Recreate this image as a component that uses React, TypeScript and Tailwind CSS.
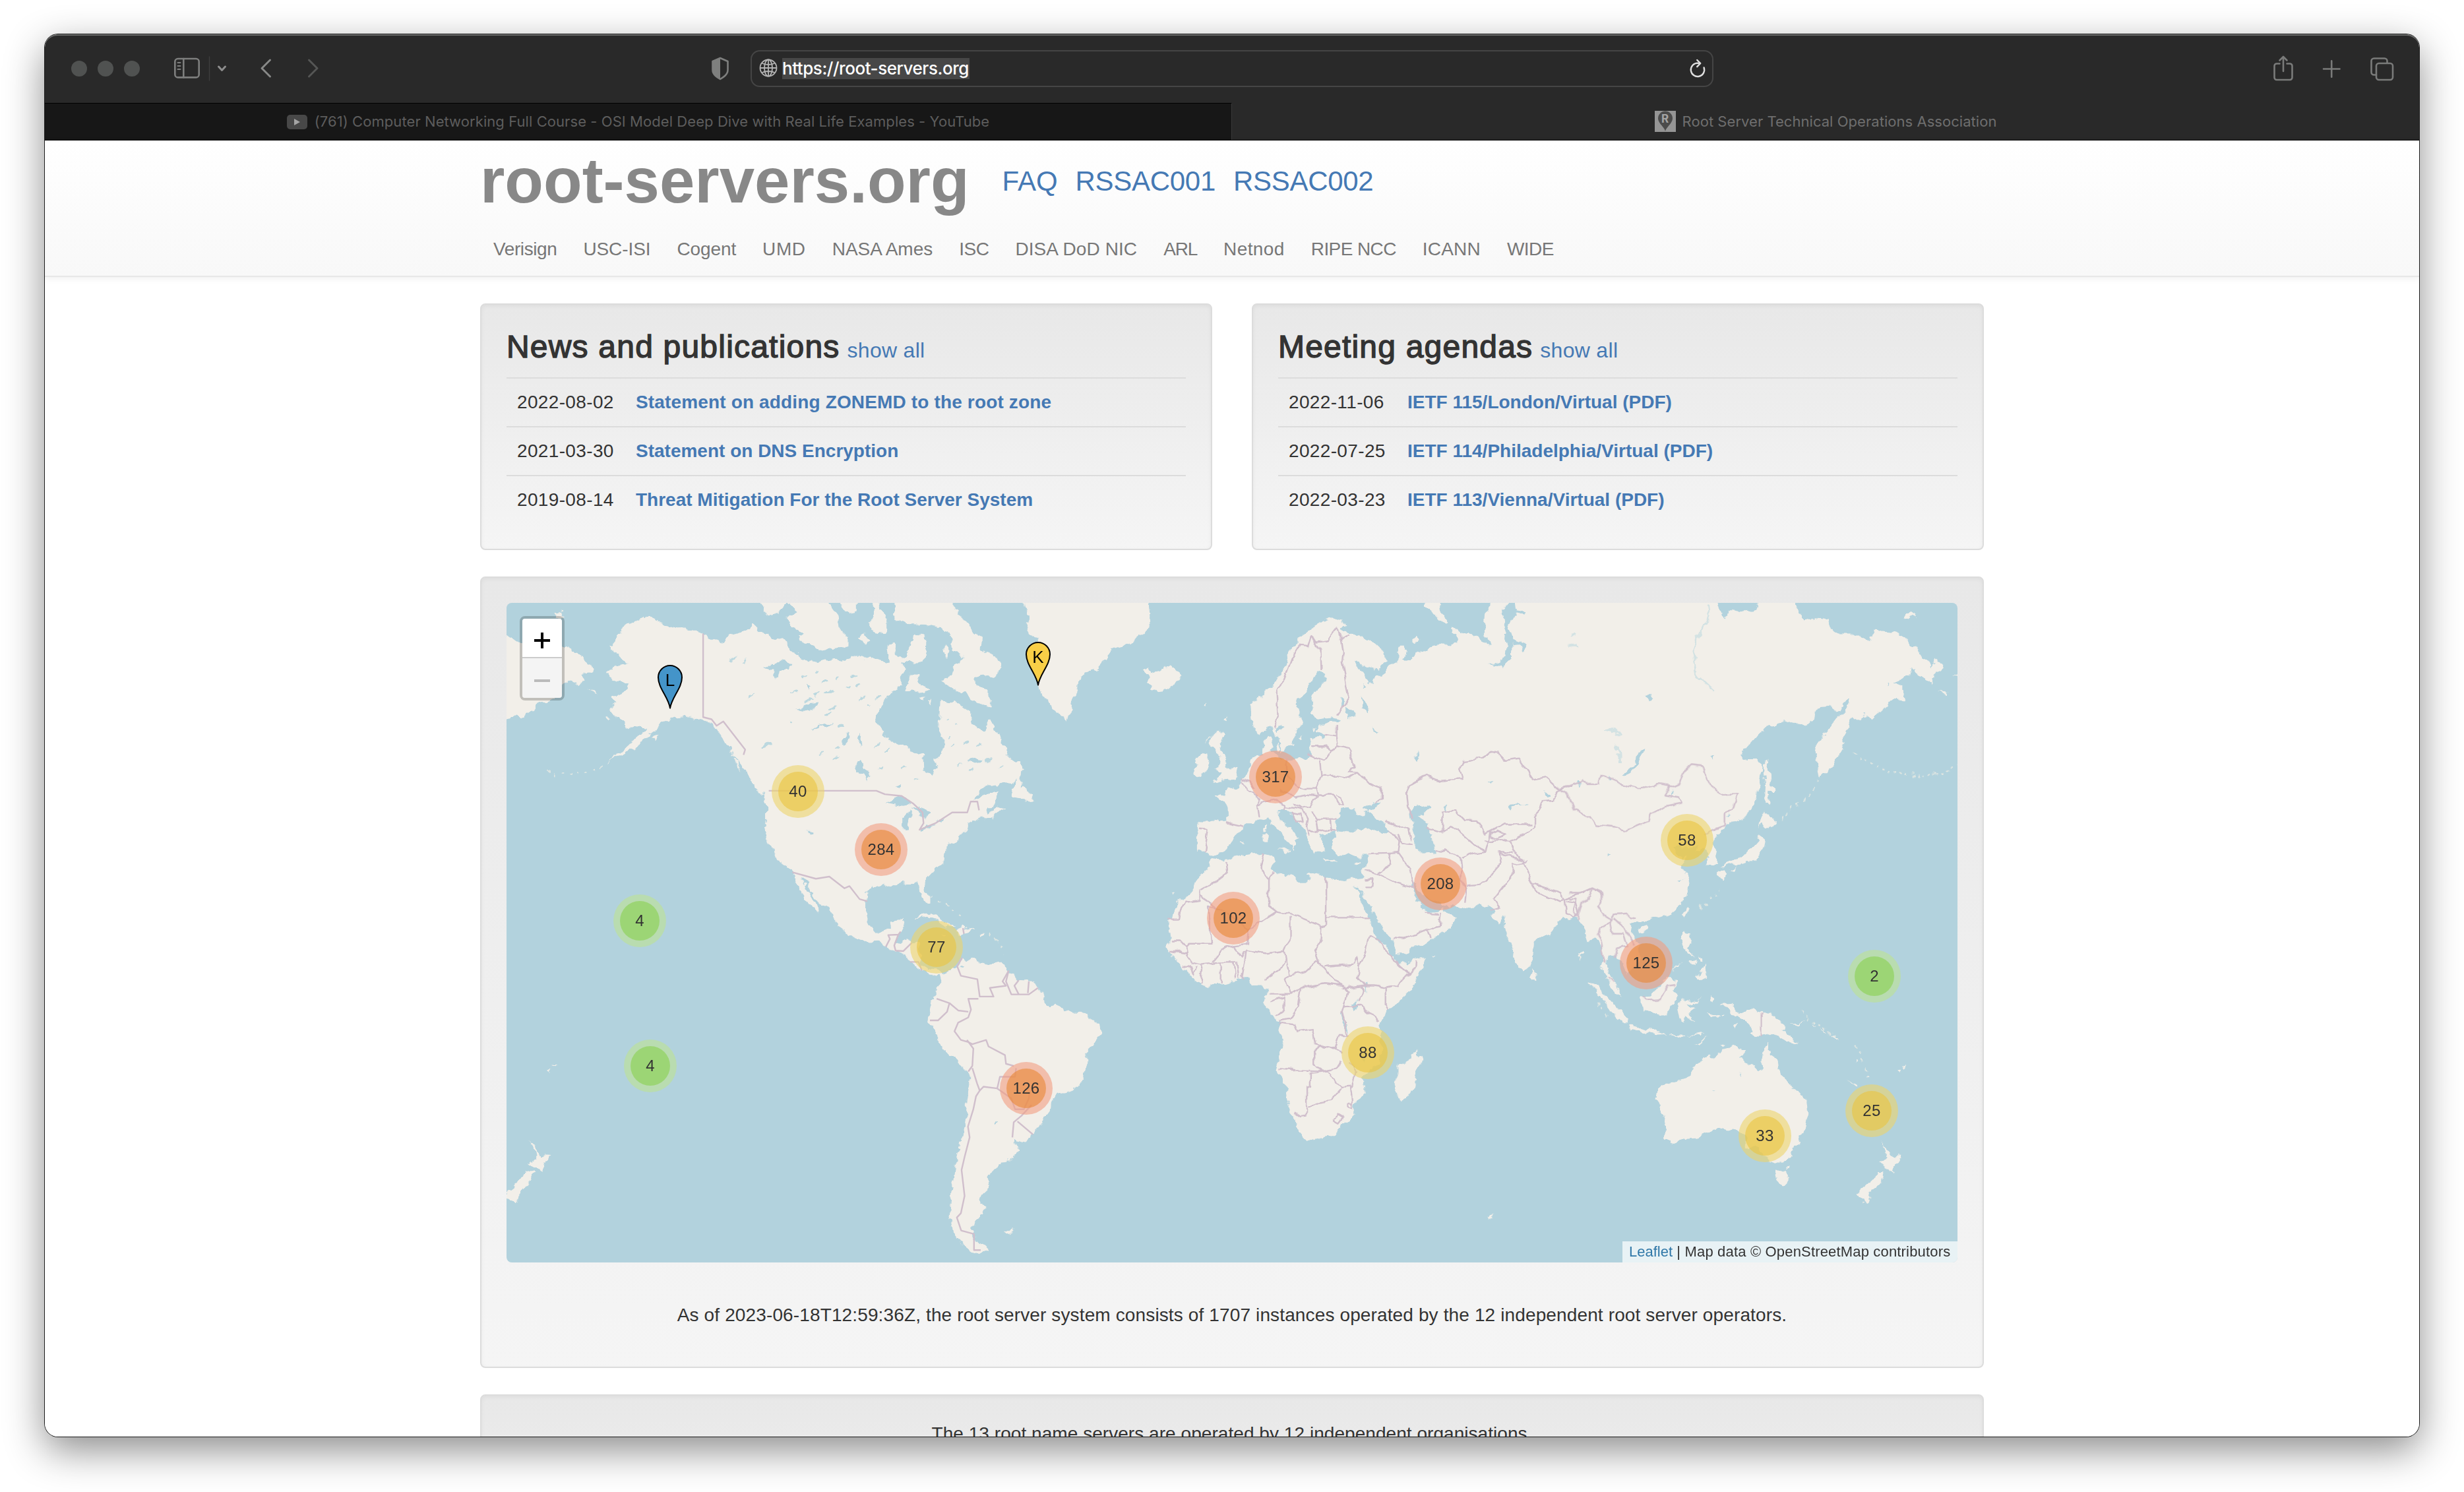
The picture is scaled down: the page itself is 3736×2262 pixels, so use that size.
import React from "react";

const LAND = "#f2efe9";
const WATER = "#b2d2dd";
const BORDER = "#d0bfcc";

/* ---------- map data: one block per region, each with its own coordinate grid ---------- */

const AMERICAS_LAND = [
  "0,90 16,95 40,110 70,112 110,118 150,112 185,118 215,135 245,150 275,172 255,185 240,185 250,205 230,208 200,200 180,215 150,245 115,255 90,268 57,290 45,280 16,290 0,290",
  "155,45 180,42 190,50 165,58",
  "600,92 575,85 545,82 520,75 490,70 460,62 425,50 405,60 385,70 360,80 350,92 318,122 335,130 355,145 370,155 378,165 345,165 330,175 302,185 320,192 335,200 345,205 378,205 375,225 355,235 325,240 340,250 322,265 335,280 350,290 365,295 370,312 400,308 430,310 415,325 385,345 345,372 310,392 380,363 420,345 440,325 465,310 480,295 500,290 520,285 545,280 575,290 600,292 625,300 645,315 665,345 680,355 690,375 705,390 720,405 740,430 745,435 770,455 785,470 790,490 790,520 785,545 795,575 815,600 828,625 850,632 865,643 880,670 895,700 915,715 935,735 950,738 940,720 925,700 905,675 893,658 905,660 925,690 945,710 975,730 995,750 1000,770 1020,780 1050,795 1095,803 1120,802 1145,815 1170,825 1195,832 1215,850 1235,865 1250,870 1275,880 1305,878 1310,895 1290,915 1280,940 1275,955 1268,985 1285,1005 1300,1030 1330,1065 1365,1088 1390,1105 1390,1135 1385,1170 1380,1210 1370,1250 1355,1300 1345,1350 1335,1400 1330,1440 1345,1480 1370,1505 1405,1525 1425,1520 1445,1515 1415,1495 1400,1465 1410,1450 1430,1435 1440,1415 1420,1400 1430,1385 1450,1370 1445,1345 1475,1325 1480,1310 1515,1308 1540,1288 1530,1270 1523,1258 1557,1267 1576,1255 1591,1235 1610,1215 1628,1195 1631,1172 1658,1155 1703,1147 1722,1128 1737,1090 1737,1058 1760,1040 1782,1015 1778,992 1760,985 1726,968 1677,967 1670,957 1632,948 1610,935 1615,932 1602,908 1576,893 1538,892 1508,875 1490,852 1441,855 1396,843 1381,850 1370,840 1355,860 1335,868 1312,876 1290,862 1270,868 1252,860 1243,839 1243,805 1200,803 1175,808 1180,790 1200,760 1190,753 1155,757 1150,775 1130,780 1110,780 1095,765 1082,745 1082,710 1085,690 1105,678 1135,670 1150,678 1180,668 1210,670 1235,667 1245,680 1250,700 1265,715 1275,715 1275,700 1262,675 1265,655 1290,635 1320,615 1325,580 1345,575 1385,545 1390,530 1425,518 1433,515 1450,522 1500,495 1474,490 1465,495 1450,505 1440,500 1460,488 1480,460 1455,458 1425,468 1400,478 1425,455 1445,443 1490,437 1515,438 1545,425 1550,405 1535,390 1505,375 1490,345 1470,310 1450,288 1443,305 1430,317 1405,305 1395,285 1390,268 1355,248 1340,252 1305,246 1303,270 1300,310 1315,345 1310,370 1290,378 1295,405 1282,420 1255,405 1253,370 1225,368 1190,350 1150,335 1135,330 1115,295 1125,265 1145,240 1158,225 1190,210 1180,195 1205,180 1195,160 1215,155 1240,162 1262,145 1265,115 1250,95 1225,88 1222,118 1205,130 1190,150 1172,140 1165,115 1150,120 1148,160 1125,155 1100,145 1080,150 1060,140 1035,155 1000,150 960,155 930,160 905,155 880,135 860,130 840,105 810,100 790,90 765,88 745,72 735,85 710,92 680,98 655,115 640,110 620,102",
  "770,10 770,22 790,45 810,52 830,38 845,22 845,10",
  "850,10 850,22 880,40 850,55 868,80 900,90 880,100 905,115 950,130 1000,125 1030,120 1030,100 1005,80 1000,50 975,22 975,10",
  "1010,10 1010,22 1030,45 1060,42 1060,10",
  "1060,98 1080,88 1100,110 1085,122",
  "1095,10 1112,35 1100,55 1100,85 1118,90 1145,92 1145,60 1125,25 1120,10",
  "1168,10 1171,55 1208,70 1268,72 1313,80 1339,100 1343,130 1373,152 1347,165 1339,190 1302,200 1336,215 1381,230 1411,250 1452,262 1456,245 1441,225 1414,210 1411,190 1433,185 1459,195 1474,188 1487,158 1456,142 1426,130 1429,102 1396,80 1366,50 1336,22 1320,10",
  "1219,185 1234,185 1246,205 1276,225 1238,228 1200,222",
  "1310,130 1322,122 1334,134 1325,148 1312,144",
  "1240,240 1258,238 1250,248",
  "1268,250 1280,246 1276,258",
  "1512,470 1538,422 1550,432 1548,450 1575,462 1583,480 1553,475",
  "1228,745 1265,738 1300,750 1345,768 1328,770 1290,755 1250,746",
  "1352,778 1375,770 1408,778 1385,785 1350,782",
  "1422,782 1440,782 1438,787 1422,787",
  "1312,783 1328,786 1318,789",
  "742,430 775,450 790,465 765,457",
  "690,380 697,383 712,412 700,402",
  "1470,492 1484,488 1476,495",
  "1495,1470 1530,1465 1510,1478",
  "83,1262 103,1280 115,1298 148,1300 130,1315 120,1335 105,1325 80,1315 105,1305 100,1285",
  "75,1332 98,1335 85,1352 60,1385 45,1402 10,1398 10,1385 50,1360",
  "135,1100 150,1097 145,1105",
  "150,1090 165,1087 158,1093",
  "255,222 288,232 270,232",
  "308,288 324,288 316,293",
  "440,335 470,325 460,342",
];

const AMERICAS_LAKES = [
  "1146,487 1175,468 1200,468 1224,487 1190,490 1165,486",
  "1192,543 1192,515 1217,498 1216,515 1208,545 1198,548",
  "1222,493 1245,493 1276,508 1262,520 1250,520 1240,502",
  "1243,545 1290,532 1275,541 1250,549",
  "1286,525 1322,518 1306,528",
  "1047,400 1065,386 1080,395 1096,420 1090,435 1078,415 1058,410",
  "780,165 815,168 825,155 858,160 855,175 825,175 820,195 800,178",
  "868,272 890,270 905,255 945,252 930,266 900,275",
  "920,315 955,300 945,312",
  "1015,345 1028,320 1038,333 1022,350",
  "1065,318 1072,335 1066,350 1060,335",
  "1385,388 1410,380 1432,384 1410,392",
  "910,545 924,553 918,558",
  "1465,1218 1478,1220 1468,1226",
  "945,300 985,302 970,310",
  "905,208 925,212 915,220",
  "1178,442 1190,440 1186,450",
  "1365,858 1378,860 1372,865",
];

const AMERICAS_LINES = [
  "600,92 600,285 625,290 640,305 660,295 690,325 725,360 720,372",
  "795,455 1115,455 1140,463 1190,467 1225,485 1252,505 1255,530 1243,545 1290,530 1340,505 1385,505 1395,480 1415,480 1420,500",
  "865,643 935,658 975,653 1020,680 1035,675 1065,705 1088,710",
  "1143,815 1155,797 1150,788 1180,787 1187,780",
  "1180,787 1168,812 1172,824 1195,825 1220,806",
  "1215,850 1240,850 1250,870",
  "1372,772 1375,785",
  "1370,840 1355,860 1366,882 1415,890 1422,930 1463,930 1452,910 1500,905 1490,895 1508,870",
  "1508,870 1500,895 1516,925 1568,925 1595,910",
  "1538,892 1525,905 1538,925",
  "1568,895 1565,922",
  "1418,935 1388,935 1396,960 1388,978 1358,990 1347,1010 1366,1030 1388,1035 1400,1040 1441,1030 1448,1045 1497,1065 1500,1085 1523,1090",
  "1294,935 1332,945 1325,965 1298,985 1274,985",
  "1332,945 1358,962 1388,965",
  "1384,1030 1403,1050 1400,1090 1388,1103",
  "1400,1095 1414,1130 1422,1147 1411,1160 1403,1190 1387,1230 1392,1255 1377,1300 1368,1330 1377,1390 1366,1430 1354,1440 1367,1470 1405,1478 1405,1515 1425,1515",
  "1422,1147 1433,1138 1474,1142 1482,1115 1527,1115 1530,1095",
  "1474,1142 1516,1165 1527,1190 1553,1190 1568,1165 1570,1150",
  "1519,1255 1523,1220 1546,1205 1576,1180",
  "1534,1218 1580,1248",
];

const ATLANTIC_LAND = [
  "655,10 662,35 690,50 668,70 690,95 722,98 700,130 715,200 735,235 775,270 835,292 845,270 860,235 885,200 890,185 950,175 990,150 1010,125 1060,120 1110,100 1165,75 1155,10",
  "1125,180 1155,170 1165,185 1200,178 1245,165 1280,190 1255,212 1210,228 1165,220 1175,212 1145,205 1160,195",
  "576,1470 600,1466 626,1467 605,1474 590,1476",
];

const WEST_LAND = [
  "172,530 200,522 245,527 272,526 270,500 262,485 228,465 255,460 270,465 272,450 300,447 318,432 340,405 355,380 395,372 391,345 410,330 425,335 418,360 440,375 470,383 500,378 540,380 560,372 555,352 560,335 580,330 590,335 600,325 575,318 580,305 615,298 640,298 652,290 625,285 600,287 570,292 555,275 560,235 590,215 605,200 610,185 580,180 560,195 540,225 515,240 505,260 510,280 530,290 515,305 500,325 495,350 470,355 455,368 450,345 430,312 415,305 400,318 380,325 358,310 352,285 350,255 385,235 420,215 450,185 475,150 490,120 520,100 560,80 600,65 640,55 680,72 660,85 700,92 760,110 805,135 810,160 780,175 730,165 700,155 720,180 740,190 755,205 770,212 770,190 795,190 800,180 830,165 850,165 850,140 845,120 870,120 880,132 868,150 895,155 920,135 970,122 1000,115 1050,118 1055,105 1035,80 1040,75 1065,90 1110,95 1140,110 1165,122 1140,85 1145,50 1165,22 1165,5 1500,5 1500,745 1450,747 1395,755 1365,785 1310,805 1305,855 1275,873 1255,860 1235,815 1215,770 1212,745 1195,765 1165,745 1175,735 1140,718 1060,722 1010,718 975,708 935,695 905,668 895,672 915,705 935,722 950,737 985,735 1000,722 1008,735 1048,745 1020,775 960,800 900,820 845,833 832,800 800,775 775,745 745,710 728,688 735,640 745,605 715,605 690,600 640,600 625,570 640,560 640,548 620,555 600,560 585,555 600,590 570,600 550,575 535,550 530,540 500,520 480,505 455,495 445,500 445,515 480,540 515,565 495,570 495,590 480,575 450,550 420,530 410,515 385,520 360,530 330,530 325,545 290,565 280,585 260,595 235,600 215,605 195,595 170,595 170,560 178,540",
  "215,612 265,615 300,605 345,600 395,600 425,605 430,620 420,635 440,645 490,652 520,665 540,665 545,648 575,645 610,655 670,662 700,658 738,655 728,690 718,690 700,672 720,700 745,740 760,765 770,790 810,815 845,850 890,850 938,840 925,880 890,920 850,945 810,965 785,1000 790,1030 795,1050 785,1080 740,1110 730,1120 738,1160 705,1175 700,1195 670,1225 630,1250 570,1258 540,1265 515,1245 500,1210 485,1195 470,1145 437,1100 450,1060 463,1035 445,990 405,955 400,945 412,910 390,905 360,905 345,888 310,888 250,900 190,905 150,885 120,865 75,830 68,815 80,795 72,755 90,725 110,710 135,700 160,670 175,650 205,635",
  "915,1050 930,1078 905,1130 885,1165 860,1172 842,1160 838,1140 850,1120 850,1090 890,1075 900,1060",
  "1307,863 1328,880 1320,892 1305,890",
  "220,437 255,432 300,428 308,405 275,400 262,370 245,355 262,325 235,315 215,340 205,352 232,362 245,380 240,400 225,408 250,412",
  "155,415 165,400 160,385 185,368 210,372 208,400 180,420",
  "432,350 446,345 446,362 434,362",
  "945,10 945,30 970,45 1000,65 1018,67 995,40 990,10",
  "898,105 912,97 926,104 912,114",
  "445,588 485,590 478,602",
  "395,552 410,550 408,575 396,575",
  "398,535 406,530 406,545 400,546",
  "590,614 645,618 640,622 595,620",
  "698,621 722,616 714,624",
  "318,572 328,568 326,574",
  "515,335 528,325 522,340",
  "560,312 572,308 566,318",
  "225,328 208,330 196,345 208,335",
  "1160,1437 1180,1432 1175,1442",
  "190,255 203,252 200,262",
  "265,288 275,280 272,292",
  "80,686 92,688 86,692",
  "967,834 982,835 975,838",
];

const WEST_LAKES = [
  "645,548 640,530 650,505 680,488 700,495 710,512 735,510 730,500 745,505 790,525 820,548 790,554 740,543 700,545 665,552",
  "732,494 770,480 790,482 762,500 742,503",
  "890,510 905,490 950,483 962,490 945,500 940,510 925,512 950,535 960,560 975,575 978,600 945,602 910,590 905,550",
  "690,945 718,940 720,955 695,966",
  "672,262 700,268 705,282 680,288",
  "725,235 745,255 748,270 730,262",
  "443,318 452,300 466,305 455,316",
  "1222,498 1240,485 1298,484 1240,490 1230,504",
  "656,970 664,970 680,1015 672,1012",
  "1005,492 1020,486 1015,500",
  "1160,432 1170,434 1164,439",
  "1228,5 1225,22 1205,40 1218,75 1212,105 1222,120 1218,140 1200,158 1162,160 1205,170 1238,150 1240,115 1262,120 1278,138 1285,132 1272,112 1240,104 1230,70 1250,45 1280,50 1285,42 1250,38 1246,5",
  "760,310 785,318 775,322",
  "650,240 668,250 660,262",
  "900,380 925,362 910,390",
  "730,205 742,215 735,220",
  "1345,455 1368,470 1350,472",
  "1460,435 1475,440 1465,445",
  "735,905 742,900 745,920",
  "730,1055 738,1060 738,1085 731,1080",
  "700,675 740,705 730,712",
];

const WEST_LINES = [
  "265,618 270,645 230,665 178,685 178,700",
  "70,753 105,753 110,735 130,712 178,708 178,700",
  "178,698 240,725 204,720 218,808 140,808 130,815 110,800 80,800",
  "240,725 345,775 435,735",
  "393,600 382,630 410,660 410,720 440,735 485,740",
  "430,640 410,660",
  "605,655 605,748 757,748",
  "485,740 590,768 605,765 605,748",
  "485,745 485,795 465,825",
  "590,768 588,800 570,825 585,855",
  "320,888 330,850 335,823 400,830 465,825 470,840 445,870 400,890",
  "480,880 540,872 575,850 600,865 620,880 660,905",
  "600,860 640,858 700,855 710,838 720,860 715,885 740,905 660,912",
  "720,860 740,830 755,790 780,800 820,830 835,850 890,875 850,905 810,910 770,905 740,905",
  "890,875 910,862 912,848",
  "808,910 808,950 818,960",
  "665,952 720,950 785,985",
  "445,990 500,995 510,1010 560,1005 570,1040 635,1050 650,1020 680,1020 660,965 680,920 660,905 600,900 560,905 520,910 510,950 480,980 445,985",
  "412,925 490,925 520,910",
  "490,925 470,890 480,880 470,840",
  "435,975 465,960 465,930 440,935 415,940",
  "440,1095 500,1098 600,1100 640,1095 660,1080",
  "595,1042 565,1058 565,1085 590,1100",
  "595,1042 640,1055 662,1060",
  "553,1105 553,1137 540,1140 540,1205 520,1207 500,1198",
  "553,1105 610,1100 630,1120 660,1140 625,1170 580,1175 545,1185",
  "660,1140 695,1138 705,1105 690,1080",
  "630,1215 645,1203 662,1210 648,1222 630,1215",
  "680,1175 694,1175 692,1188 680,1185 680,1175",
  "690,1140 695,1175",
  "725,905 735,915 715,940",
  "220,850 250,825 290,812 340,808 345,775",
  "290,812 320,838 330,825",
  "80,825 130,830 150,850 185,855 220,852 245,850 300,850",
  "72,825 110,825",
  "130,815 135,835",
  "248,850 248,900",
  "292,850 298,888",
  "302,850 310,888",
  "185,855 180,900",
  "120,865 145,858 155,880 165,860",
  "845,850 890,877",
  "430,308 445,285 440,220 460,205 490,150 515,120 545,122 555,100",
  "555,100 588,130 590,175",
  "555,100 575,112 610,108 640,80 655,90 665,140 660,155 670,190 675,220 685,240 645,280",
  "655,108 680,95",
  "640,300 640,330 645,352",
  "598,325 640,330",
  "558,352 605,352 625,360 645,352 685,358 700,400 685,410 715,412",
  "585,385 590,420 570,450 575,465",
  "470,380 475,420 510,445 540,450 575,450",
  "545,372 580,380 600,385 625,360",
  "590,420 640,420 685,425 715,412 755,440 795,450 795,475 775,485",
  "575,465 630,465 650,488 665,490 655,470 640,465",
  "555,500 575,520 640,520",
  "500,470 540,465 575,468 550,490 520,495 490,485",
  "318,432 345,455 385,475 370,490 375,520",
  "318,428 345,435 362,450",
  "262,527 325,537",
  "175,543 203,545 192,597",
  "370,490 400,480 440,475 465,488 460,498",
  "450,455 480,460 500,470",
  "465,492 500,495 530,500 545,520 540,540 550,560",
  "490,505 505,525 530,530 525,510 490,505",
  "545,545 590,548 620,545 645,545",
  "620,520 625,550",
  "570,520 575,548",
  "745,600 815,598 850,597",
  "850,597 855,570 820,545",
  "850,597 890,635 905,680 845,668 790,650 755,640 735,640",
  "815,598 825,625 780,645",
  "738,660 765,658 762,675 740,675",
  "805,525 850,535 885,545 895,570",
  "848,555 865,575 900,580",
  "832,795 870,797 950,775 960,798",
  "950,775 992,765 996,735",
  "940,738 990,740",
  "978,595 1010,588 1065,610 1070,640 1060,660 1085,680 1080,715",
  "1085,675 1130,672 1160,655 1200,620 1195,595 1240,600",
  "1000,548 1030,535 1060,550 1110,580 1145,595 1100,600 1070,612",
  "1000,548 1000,505 1045,500 1080,525 1120,525 1145,555 1165,550",
  "950,540 1000,550",
  "895,520 885,490 880,460 890,440 940,420 995,432 1070,428 1060,405 1070,385 1135,380 1170,365 1190,368 1215,385 1260,380 1310,430 1355,425 1400,453",
  "1400,453 1375,478 1345,480 1315,515 1315,540 1230,572 1240,595 1275,615",
  "1145,595 1165,550 1210,532 1305,532",
  "1165,555 1190,548 1215,555 1190,565 1160,560",
  "1145,570 1200,568 1228,572",
  "1195,595 1200,600 1275,615",
  "1290,620 1240,625 1240,650 1175,705 1195,725 1160,730",
  "1275,615 1290,645 1310,670 1405,692 1415,705 1480,690 1510,680 1545,695",
  "1310,672 1320,688 1400,712 1412,705",
  "1415,705 1420,735 1445,745 1465,740 1455,715 1420,710",
  "1400,453 1440,442",
];

const EAST_LAND = [
  "-10,5 545,5 545,22 580,62 595,38 640,42 690,40 700,22 700,5 830,5 840,25 865,60 920,55 960,60 975,85 1000,95 1085,95 1120,110 1130,85 1200,88 1250,105 1325,150 1345,175 1360,150 1390,172 1360,190 1350,210 1320,195 1265,172 1260,190 1200,205 1235,215 1245,245 1190,248 1120,290 1100,280 1060,290 1045,285 1025,315 1020,345 1000,370 975,400 930,428 915,375 920,345 955,320 985,295 1020,275 1045,245 1020,250 1005,270 980,270 975,260 930,262 885,305 830,297 740,303 700,325 635,372 660,385 700,385 715,400 705,440 700,470 670,500 625,528 590,530 565,545 545,560 530,575 550,600 548,625 510,625 515,600 500,585 470,600 480,580 440,590 400,580 385,585 420,610 440,605 410,630 430,650 445,670 430,700 410,720 370,742 330,748 285,755 250,755 225,765 220,780 250,805 265,840 245,860 210,880 200,860 190,850 170,835 145,830 135,850 150,885 170,900 200,935 160,915 140,885 118,865 125,840 110,800 95,795 65,805 55,775 30,750 0,745 -10,745",
  "1240,55 1265,42 1290,50 1265,60",
  "1460,170 1425,185 1445,192 1460,190",
  "1370,225 1405,228 1400,235",
  "72,897 110,905 150,940 200,970 220,990 195,990 150,965 125,940 100,915",
  "220,997 280,1003 320,1010 365,1018 330,1019 270,1013 225,1005",
  "370,1018 430,1020 410,1026",
  "440,1019 500,1014 490,1020",
  "460,1037 515,1019 480,1036",
  "265,935 275,930 320,915 360,885 375,885 400,900 385,915 400,935 380,950 360,975 320,970 270,962",
  "380,870 415,848 400,862",
  "400,948 420,935 480,940 490,930 480,943 430,945 440,955 470,955 445,965 460,990 435,970 415,992 405,970",
  "422,780 450,783 450,805 440,820 465,838 435,828 415,805",
  "450,850 470,845 465,862",
  "480,835 495,840 490,852",
  "468,882 485,875 500,858 508,885 490,892 475,888",
  "420,740 435,718 445,722 432,748",
  "260,773 290,767 280,780 265,782",
  "552,640 575,635 582,650 570,658 560,655",
  "590,635 615,628 605,638",
  "560,633 600,615 650,605 680,585 700,570 705,552 722,570 712,600 690,615 660,618 640,625 620,626 600,625",
  "700,542 715,520 722,500 745,515 770,525 740,540 715,532",
  "718,395 735,382 745,420 758,455 735,455 745,490 725,485 728,440",
  "565,950 610,948 620,965 665,958 712,967 750,975 800,1000 790,1005 845,1035 800,1030 760,1015 712,1022 665,1012 680,1005 650,985 600,970 585,960",
  "815,993 850,993 872,980 855,998",
  "525,925 535,935 530,945 522,940",
  "505,972 545,970 560,974 530,976",
  "560,972 572,970 570,976",
  "612,995 625,992 618,1002",
  "900,990 915,998 908,998",
  "930,1002 960,1016 945,1012",
  "975,1018 1000,1030 985,1028",
  "1032,1122 1072,1140 1060,1138",
  "1068,1075 1078,1080 1070,1084",
  "1100,1108 1106,1112 1102,1116",
  "1215,1100 1232,1098 1228,1104",
  "1238,1090 1254,1087 1246,1094",
  "330,1140 370,1128 435,1118 470,1085 520,1065 545,1073 570,1050 600,1045 650,1052 635,1072 700,1100 712,1092 722,1045 735,1038 745,1065 770,1075 785,1110 825,1135 860,1155 880,1170 885,1200 870,1235 840,1270 830,1297 800,1310 760,1310 720,1300 690,1270 660,1280 650,1255 615,1240 570,1232 500,1245 470,1255 420,1258 380,1270 350,1258 360,1240 345,1200 325,1170",
  "760,1332 785,1336 812,1332 810,1350 790,1365 775,1355",
  "805,1322 815,1320 812,1328",
  "1155,1262 1180,1280 1195,1298 1232,1300 1215,1315 1200,1335 1185,1325 1150,1315 1180,1305 1175,1285",
  "1150,1335 1170,1335 1160,1350 1130,1380 1105,1402 1070,1392 1065,1385 1110,1360 1145,1340",
  "1078,1404 1092,1403 1084,1409",
  "560,1042 580,1040 572,1047",
  "35,828 42,828 38,850",
];

const EAST_LAKES = [
  "192,420 235,402 262,360 278,360 262,390 215,421",
  "135,598 150,600 142,604",
  "520,380 540,376 530,384",
  "585,508 595,503 592,512",
  "375,455 385,452 380,460",
  "280,235 310,235 295,250",
  "30,435 45,436 38,442",
  "140,422 150,425 145,432",
  "535,1143 548,1142 540,1146",
  "400,660 425,658 410,664",
  "630,1108 640,1108 635,1112",
  "1172,205 1182,207 1176,209",
];

const EAST_LINES = [
  "-37,453 0,440 45,430 65,440 110,440 120,417 170,430 180,438 250,450 330,440 380,445 405,438 430,405 450,395 495,398 520,440 570,465 625,463 605,500 575,505 575,535 530,545",
  "-37,453 0,470 15,500 75,515 100,535 170,540 210,547 295,525 300,508 360,490 415,483 405,473 355,468 370,445",
  "0,690 35,692 85,680 120,690 120,715 105,722 130,745 155,755 165,740 210,738 225,748 245,750",
  "85,680 70,700 45,715 30,755",
  "0,705 25,705 15,735 30,745",
  "150,760 110,775 105,785 120,810 118,825 130,850",
  "150,755 160,785 200,785 215,815 178,820 170,840",
  "165,750 200,770 240,810",
  "140,885 165,893",
  "275,932 285,937 340,935 365,905 395,903",
  "712,967 712,1022",
  "500,558 530,545",
];

const EAST_RIVERS = [
  "515,22 522,60 490,80 465,115 462,145 475,190 505,208 540,226",
  "0,92 20,95 M0,122 30,120",
  "130,318 175,312 185,330",
  "162,355 182,355 185,390",
];

const NORTH_LAKES: [number, number, number, number][] = [
  [690, 150, 14, 2], [720, 158, 8, 2], [745, 235, 10, 2], [790, 350, 16, 4], [960, 205, 10, 3], [975, 225, 14, 3],
  [935, 232, 12, 3], [1000, 195, 9, 3], [1045, 190, 8, 4], [985, 262, 14, 3], [970, 278, 8, 3], [1010, 305, 6, 4],
  [1000, 355, 9, 3], [1075, 240, 10, 2], [1090, 262, 5, 2], [1115, 350, 8, 2], [1150, 360, 10, 2], [955, 370, 9, 2],
  [990, 378, 12, 2], [1130, 405, 8, 2], [1195, 400, 6, 2], [1230, 430, 6, 2], [1330, 330, 6, 2], [1345, 350, 8, 2],
  [1380, 345, 9, 2], [1395, 405, 8, 2], [1450, 385, 14, 3], [1480, 400, 9, 2], [1420, 350, 7, 2], [1360, 395, 8, 2],
  [1330, 290, 5, 2], [1350, 300, 4, 2], [870, 225, 8, 2], [900, 190, 9, 2], [940, 185, 8, 2], [1030, 215, 7, 2],
  [1060, 210, 9, 3], [915, 245, 8, 2], [1120, 240, 6, 2], [860, 300, 6, 2],
];

type Cluster = { n: number; x: number; y: number; tone: "small" | "medium" | "large" };

/* Marker centres, in pixels from the map's top-left corner. */
const clusters: Cluster[] = [
  { n: 40, x: 442, y: 286, tone: "medium" },
  { n: 284, x: 568, y: 374, tone: "large" },
  { n: 4, x: 202, y: 482, tone: "small" },
  { n: 4, x: 218, y: 702, tone: "small" },
  { n: 77, x: 652, y: 522, tone: "medium" },
  { n: 126, x: 788, y: 736, tone: "large" },
  { n: 317, x: 1166, y: 264, tone: "large" },
  { n: 102, x: 1102, y: 478, tone: "large" },
  { n: 208, x: 1416, y: 426, tone: "large" },
  { n: 88, x: 1306, y: 682, tone: "medium" },
  { n: 58, x: 1790, y: 360, tone: "medium" },
  { n: 125, x: 1728, y: 546, tone: "large" },
  { n: 2, x: 2074, y: 566, tone: "small" },
  { n: 25, x: 2070, y: 770, tone: "medium" },
  { n: 33, x: 1908, y: 808, tone: "medium" },
];

const tones = {
  small: ["bg-[rgba(190,227,146,0.6)]", "bg-[rgba(138,209,80,0.62)]"],
  medium: ["bg-[rgba(237,212,108,0.6)]", "bg-[rgba(233,195,62,0.6)]"],
  large: ["bg-[rgba(241,157,130,0.6)]", "bg-[rgba(232,137,57,0.62)]"],
};

function Region(props: { transform: string; land?: string[]; lakes?: string[]; lines?: string[]; rivers?: string[] }) {
  return (
    <g transform={props.transform}>
      {props.land?.map((p, i) => <polygon key={i} points={p} fill={LAND} />)}
      {props.lakes?.map((p, i) => <polygon key={i} points={p} fill={WATER} />)}
      {props.rivers?.map((p, i) => (
        <path key={i} d={"M" + p} fill="none" stroke="#d3e2e3" strokeWidth={3} vectorEffect="non-scaling-stroke" />
      ))}
      {props.lines?.map((p, i) => (
        <polyline key={i} points={p} fill="none" stroke={BORDER} strokeWidth={2.4} strokeLinejoin="round" vectorEffect="non-scaling-stroke" />
      ))}
    </g>
  );
}

const AMERICAS = "translate(-8 -14) scale(0.5102 0.6569)";
const ATLANTIC = "translate(532 -14) scale(0.38265 0.6569)";
const WEST = "translate(972 -14) scale(0.44643 0.6569)";
const EAST = "translate(1612 -14) scale(0.40816 0.6569)";

function WorldMap() {
  return (
    <svg className="block h-full w-full" viewBox="0 0 2200 1000">
      <defs>
        <filter id="coast" x="0" y="0" width="2200" height="1000" filterUnits="userSpaceOnUse">
          <feTurbulence type="fractalNoise" baseFrequency="0.07" numOctaves="3" seed="4" result="n" />
          <feDisplacementMap in="SourceGraphic" in2="n" scale="13" xChannelSelector="R" yChannelSelector="G" />
        </filter>
        <filter id="wobble" x="0" y="0" width="2200" height="1000" filterUnits="userSpaceOnUse">
          <feTurbulence type="fractalNoise" baseFrequency="0.06" numOctaves="2" seed="4" result="n" />
          <feDisplacementMap in="SourceGraphic" in2="n" scale="9" xChannelSelector="R" yChannelSelector="G" />
        </filter>
      </defs>
      <rect width="2200" height="1000" fill={WATER} />
      <g filter="url(#coast)">
        <g transform={AMERICAS} fill="none" stroke="#dfe6e2" strokeWidth={4} strokeDasharray="7 16">
          <path d="M300,400 Q220,425 130,412" />
          <path d="M1300,705 Q1350,735 1375,752" />
          <path d="M1450,785 Q1490,800 1492,835" />
        </g>
        <g transform={EAST} fill="none" stroke="#dfe6e2" strokeWidth={4} strokeDasharray="8 14">
          <path d="M922,432 Q880,480 775,522" />
          <path d="M1055,368 Q1150,410 1270,418 T1450,390" />
          <path d="M480,726 L560,685" />
          <path d="M100,945 L150,980" />
          <path d="M1060,1040 Q1095,1070 1100,1105" />
          <path d="M860,968 L1000,1028" />
        </g>
        <Region transform={ATLANTIC} land={ATLANTIC_LAND} />
        <Region transform={AMERICAS} land={AMERICAS_LAND} lakes={AMERICAS_LAKES} />
        <g transform={AMERICAS} fill="#bcd8df">
          {NORTH_LAKES.map(([cx, cy, rx, ry], i) => (
            <ellipse key={i} cx={cx} cy={cy} rx={rx} ry={ry} transform={`rotate(-20 ${cx} ${cy})`} />
          ))}
        </g>
        <Region transform={WEST} land={WEST_LAND} />
        <Region transform={EAST} land={EAST_LAND} lakes={EAST_LAKES} rivers={EAST_RIVERS} />
        <Region transform={WEST} lakes={WEST_LAKES} />
      </g>
      <Region transform={AMERICAS} lines={AMERICAS_LINES} />
      <g filter="url(#wobble)">
        <Region transform={WEST} lines={WEST_LINES} />
        <Region transform={EAST} lines={EAST_LINES} />
      </g>
    </svg>
  );
}

function ClusterMarker({ n, x, y, tone }: Cluster) {
  const [outer, inner] = tones[tone];
  return (
    <div
      className={"absolute flex size-20 items-center justify-center rounded-full " + outer}
      style={{ left: x - 40, top: y - 40 }}
    >
      <div className={"flex size-[60px] items-center justify-center rounded-full text-[24px] leading-none tracking-[0.3px] text-[#333] " + inner}>
        {n}
      </div>
    </div>
  );
}

function Pin({ letter, color, x, y }: { letter: string; color: string; x: number; y: number }) {
  return (
    <div className="absolute flex h-[68px] w-10 justify-center" style={{ left: x - 20, top: y - 67 }}>
      <svg className="absolute inset-0" width="40" height="68" viewBox="0 0 40 68">
        <path d="M20 66.5 C17.5 50 2 36 2 20 A18 18 0 0 1 38 20 C38 36 22.5 50 20 66.5 Z" fill={color} stroke="#000" strokeWidth="2" strokeLinejoin="round" />
      </svg>
      <span className="relative mt-[11px] text-[26px] leading-[26px] text-black">{letter}</span>
    </div>
  );
}

function Toolbar() {
  return (
    <div className="flex h-[104px] items-center bg-[#292929]">
      <div className="ml-[40px] flex gap-4">
        <i className="size-6 rounded-full bg-[#505251]" />
        <i className="size-6 rounded-full bg-[#505251]" />
        <i className="size-6 rounded-full bg-[#505251]" />
      </div>
      <svg className="ml-[48px] -mt-[2px]" width="230" height="40" viewBox="260 83 230 40" fill="none" stroke="#7e7f7e" strokeWidth="2.6" strokeLinecap="round" strokeLinejoin="round">
        <rect x="265.3" y="89" width="36.4" height="28.4" rx="4.5" />
        <path d="M278.3 89V117.4" />
        <path d="M269.5 95h4M269.5 100h4M269.5 105h4" strokeWidth="2" />
        <path d="M317.5 86V122" stroke="#3d3d3d" strokeWidth="1.5" />
        <path d="M331.5 101l5 5.5 5-5.5" stroke="#8d8d8d" strokeWidth="3" />
        <path d="M409.5 91l-12.5 12.5 12.5 12.5" stroke="#888988" strokeWidth="3" />
        <path d="M468.5 91l12.5 12.5-12.5 12.5" stroke="#555655" strokeWidth="3" />
      </svg>
      <svg className="ml-[587px]" width="30" height="36" viewBox="0 0 30 36">
        <path d="M15 2 L26.5 7 V20 C26.5 27 20 31 15 34 C10 31 3.5 27 3.5 20 V7 Z" fill="none" stroke="#7e7f7e" strokeWidth="2.6" strokeLinejoin="round" />
        <path d="M15 2 L3.5 7 V20 C3.5 27 10 31 15 34 Z" fill="#7e7f7e" />
      </svg>
      <div className="ml-[31px] flex h-[56px] w-[1460px] items-center rounded-[14px] border-2 border-[#454545] pl-[11px] pr-[9px]">
        <svg className="-mt-[2px]" width="28" height="28" viewBox="0 0 28 28" fill="none" stroke="#b4b4b4" strokeWidth="1.8">
          <circle cx="14" cy="14" r="12.5" />
          <ellipse cx="14" cy="14" rx="6" ry="12.5" />
          <path d="M14 1.5v25M1.5 14h25M4 6.7q10 4.6 20 0M4 21.3q10-4.6 20 0" />
        </svg>
        <span className="ml-[7px] h-8 bg-[#474747] pr-px font-[Inter] text-[26px] leading-8 font-medium tracking-[-0.46px] text-white">https://root-servers.org</span>
        <svg className="ml-auto" width="26" height="30" viewBox="0 0 26 30" fill="none" stroke="#dedede" strokeWidth="2.4" strokeLinecap="round" strokeLinejoin="round">
          <path d="M22.6 13.500 A10.2 10.2 0 1 1 13 6.600 L17 7" />
          <path d="M12.2 2 L17.2 7 L12.2 12.2" />
        </svg>
      </div>
      <svg className="ml-auto mr-[34px]" width="190" height="42" viewBox="3444 81 190 42" fill="none" stroke="#7a7b7a" strokeWidth="2.6" strokeLinecap="round" strokeLinejoin="round">
        <path d="M3456.5 94.5H3452a3.5 3.5 0 0 0-3.5 3.5v17.5a3.5 3.5 0 0 0 3.5 3.5h20a3.5 3.5 0 0 0 3.5-3.5V98a3.5 3.5 0 0 0-3.5-3.5h-4.5" />
        <path d="M3462 106V84.5M3456.5 89.500l5.500-5.500 5.500 5.500" />
        <path d="M3523 102.5h24.500M3535.200 90.200v24.600" />
        <path d="M3603 111.5h-3.500a4 4 0 0 1-4-4V90.500a4 4 0 0 1 4-4h16a4 4 0 0 1 4 4v3" />
        <rect x="3603" y="94" width="25" height="25" rx="4" />
      </svg>
    </div>
  );
}

function TabBar() {
  return (
    <div className="flex h-[57px] border-b border-black bg-[#292929] font-[Inter] text-[22px]">
      <div className="flex w-[1800px] items-center justify-center border-t border-r border-t-black border-r-[#3a3a3a] bg-[#171717] text-[#5d5d5d]">
        <span className="mt-px mr-[11px] flex h-[22px] w-[31px] items-center justify-center rounded-[5px] bg-[#484848]">
          <svg width="9" height="10" viewBox="0 0 9 10"><path d="M0 0 L9 5 L0 10 Z" fill="#a5a5a5" /></svg>
        </span>
        <span className="tracking-[0.07px]">(761) Computer Networking Full Course - OSI Model Deep Dive with Real Life Examples - YouTube</span>
      </div>
      <div className="flex flex-1 items-center justify-center text-[#6e6e6e]">
        <span className="relative mr-[10px] flex size-8 justify-center bg-[#959595]">
          <svg className="absolute inset-0" width="32" height="32" viewBox="0 0 32 32">
            <path d="M16 31 C15 25 5 19 5 11.5 A11 11 0 0 1 27 11.5 C27 19 17 25 16 31Z" fill="#4b4b4b" />
          </svg>
          <b className="relative mt-[3px] text-[17px] leading-[18px] font-bold text-[#a5a5a5]">R</b>
        </span>
        <span className="tracking-[0.04px]">Root Server Technical Operations Association</span>
      </div>
    </div>
  );
}

const operators: [string, string][] = [
  ["Verisign", "tracking-[-0.4px]"],
  ["USC-ISI", "tracking-[-0.1px]"],
  ["Cogent", "tracking-[-0.1px]"],
  ["UMD", "tracking-[0.6px]"],
  ["NASA Ames", "tracking-normal"],
  ["ISC", "tracking-[-0.5px]"],
  ["DISA DoD NIC", "tracking-[0.1px]"],
  ["ARL", "tracking-[-1.2px]"],
  ["Netnod", "tracking-[0.4px]"],
  ["RIPE NCC", "tracking-[-0.6px]"],
  ["ICANN", "tracking-[0.2px]"],
  ["WIDE", "tracking-[-0.5px]"],
];

function SiteHeader() {
  return (
    <header className="relative h-[207px] border-b-2 border-[#e7e7e7] bg-linear-to-b from-white to-[#f8f8f8] pl-[660px] shadow-[0_2px_10px_rgba(0,0,0,0.065)]">
      <div className="flex h-[145px] items-start pt-[13px]">
        <h1 className="text-[96px] leading-[96px] font-bold text-[#888]">root-servers.org</h1>
        <nav className="mt-[28px] ml-[50px] flex gap-[27px] text-[42px] leading-[42px] text-[#4579b4]">
          <a>FAQ</a>
          <a className="tracking-[-0.3px]">RSSAC001</a>
          <a className="tracking-[-0.3px]">RSSAC002</a>
        </nav>
      </div>
      <nav className="flex gap-10 pl-5 text-[28px] leading-10 text-[#777]">
        {operators.map(([name, spacing]) => <a key={name} className={spacing}>{name}</a>)}
      </nav>
    </header>
  );
}

const well = "rounded-[8px] border-2 border-[#dcdcdc] bg-linear-to-b from-[#e8e8e8] to-[#f5f5f5] shadow-[inset_0_2px_6px_rgba(0,0,0,0.05)]";

function ListPanel({ title, rows }: { title: string; rows: [string, string, string?][] }) {
  return (
    <section className={"h-[374px] w-[1110px] px-[38px] " + well}>
      <div className="flex h-[110px] items-baseline pt-[37px] leading-[53px]">
        <h2 className="text-[48px] tracking-[1.2px] text-[#333] [-webkit-text-stroke:1.4px_#333]">{title}</h2>
        <a className="ml-[11px] text-[32px] tracking-[0.3px] text-[#4579b4]">show all</a>
      </div>
      {rows.map(([date, text, spacing = ""]) => (
        <div key={date} className="flex h-[74px] items-center border-t-2 border-[#dcdcdc] px-4 text-[28px] leading-10 text-[#333]">
          <span className="w-[180px] tracking-[0.35px]">{date}</span>
          <a className={"font-bold text-[#4579b4] " + spacing}>{text}</a>
        </div>
      ))}
    </section>
  );
}

function MapPanel() {
  return (
    <section className={"mt-10 h-[1200px] p-[38px] " + well}>
      <div className="relative h-[1000px] overflow-hidden rounded-[8px]">
        <WorldMap />
        {clusters.map((c, i) => <ClusterMarker key={i} {...c} />)}
        <Pin letter="L" color="#4494c9" x={248} y={160} />
        <Pin letter="K" color="#f9cf47" x={806} y={125} />
        <div className="absolute top-5 left-5 flex h-[128px] w-[68px] flex-col rounded-[8px] border-4 border-black/20 bg-clip-padding">
          <div className="flex h-[60px] items-center justify-center rounded-t-[4px] border-b-2 border-[#ccc] bg-white pt-2">
            <svg width="26" height="26" viewBox="0 0 26 26" stroke="#000" strokeWidth="4"><path d="M1 13h24M13 1v24" /></svg>
          </div>
          <div className="flex h-[60px] items-center justify-center rounded-b-[4px] bg-[#f4f4f4]">
            <svg width="26" height="26" viewBox="0 0 26 26" stroke="#bbb" strokeWidth="4"><path d="M1 17h24" /></svg>
          </div>
        </div>
        <div className="absolute right-0 bottom-0 flex h-8 w-[508px] items-center bg-white/70 pl-[10px] text-[22px] leading-8 whitespace-pre text-[#333]">
          <a className="text-[#3078a8]">Leaflet</a>
          <span className="tracking-[0.17px]"> | Map data © OpenStreetMap contributors</span>
        </div>
      </div>
      <p className="mt-[60px] text-center text-[28px] leading-10 tracking-[0.13px] text-[#333]">
        As of 2023-06-18T12:59:36Z, the root server system consists of 1707 instances operated by the 12 independent root server operators.
      </p>
    </section>
  );
}

export default function App() {
  return (
    <div className="h-[2262px] w-[3736px] overflow-hidden bg-white px-[68px] pt-[52px] font-['Liberation_Sans',sans-serif]">
      <div className="h-[2126px] w-[3600px] rounded-[20px] shadow-[0_0_0_1px_#1c1c1c,0_20px_60px_rgba(0,0,0,0.46)]">
        <div className="relative h-full overflow-hidden rounded-[20px] bg-white">
          <Toolbar />
          <TabBar />
          <SiteHeader />
          <main className="mx-auto w-[2280px] pt-10">
            <div className="flex justify-between">
              <ListPanel
                title="News and publications"
                rows={[
                  ["2022-08-02", "Statement on adding ZONEMD to the root zone", "tracking-[0.15px]"],
                  ["2021-03-30", "Statement on DNS Encryption"],
                  ["2019-08-14", "Threat Mitigation For the Root Server System"],
                ]}
              />
              <ListPanel
                title="Meeting agendas"
                rows={[
                  ["2022-11-06", "IETF 115/London/Virtual (PDF)"],
                  ["2022-07-25", "IETF 114/Philadelphia/Virtual (PDF)"],
                  ["2022-03-23", "IETF 113/Vienna/Virtual (PDF)"],
                ]}
              />
            </div>
            <MapPanel />
            <section className={"mt-10 h-[400px] pt-[38px] text-center text-[28px] leading-10 tracking-[0.05px] text-[#333] " + well}>
              The 13 root name servers are operated by 12 independent organisations.
            </section>
          </main>
          <div className="pointer-events-none absolute inset-x-0 top-0 h-[160px] rounded-t-[20px] border-t-2 border-[#6a6b6a]" />
        </div>
      </div>
    </div>
  );
}
